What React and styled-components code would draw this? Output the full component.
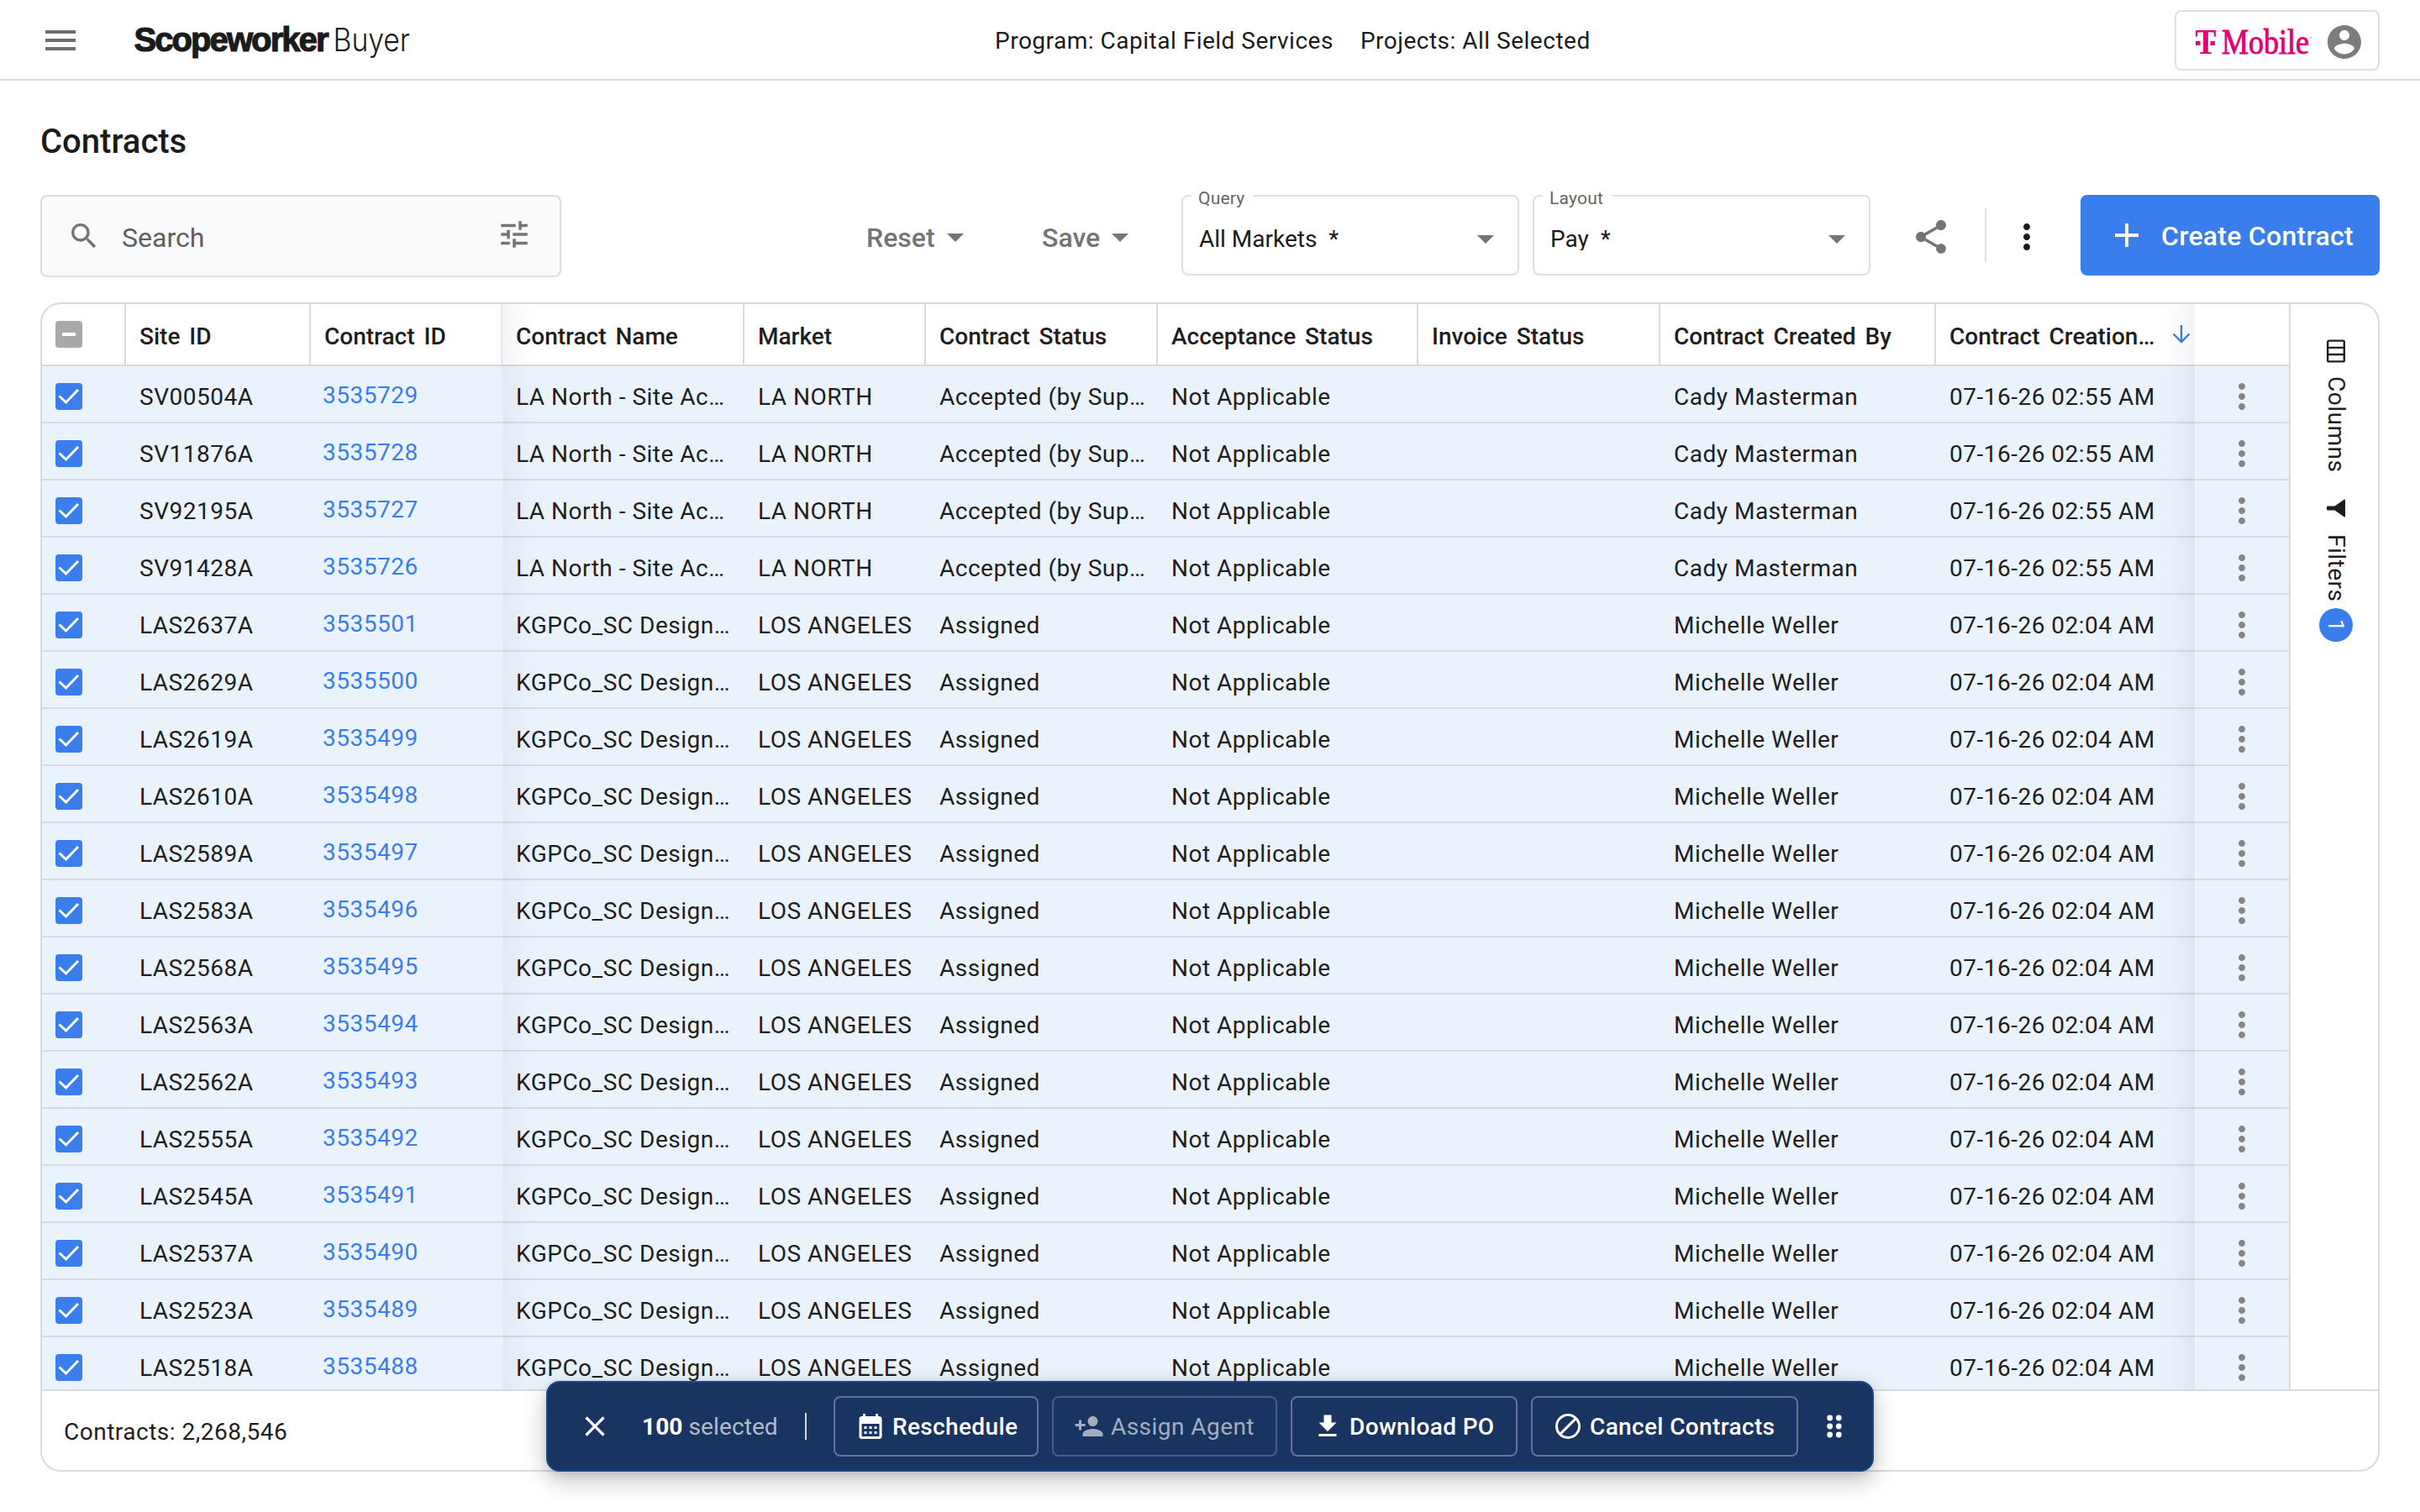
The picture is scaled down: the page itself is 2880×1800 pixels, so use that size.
import React from "react";
import styled, { createGlobalStyle, css } from "styled-components";

const GlobalStyle = createGlobalStyle`
  * { box-sizing: border-box; }
  body {
    margin: 0;
    background: #fff;
    color: #1e1e1e;
    font-family: Roboto, "Liberation Sans", sans-serif;
    font-size: 28px;
    overflow: hidden;
  }
  svg { display: block; flex: none; }
`;

/* ---------- icons ---------- */

const PATHS = {
  menu: "M3 18h18v-2H3v2zm0-5h18v-2H3v2zm0-7v2h18V6H3z",
  search:
    "M15.5 14h-.79l-.28-.27C15.41 12.59 16 11.11 16 9.5 16 5.91 13.09 3 9.5 3S3 5.91 3 9.5 5.91 16 9.5 16c1.61 0 3.09-.59 4.23-1.57l.27.28v.79l5 4.99L20.49 19l-4.99-5zm-6 0C7.01 14 5 11.99 5 9.5S7.01 5 9.5 5 14 7.01 14 9.5 11.99 14 9.5 14z",
  tune: "M3 17v2h6v-2H3zM3 5v2h10V5H3zm10 16v-2h8v-2h-8v-2h-2v6h2zM7 9v2H3v2h4v2h2V9H7zm14 4v-2H11v2h10zm-6-4h2V7h4V5h-4V3h-2v6z",
  caret: "M7 10l5 5 5-5z",
  share:
    "M18 16.08c-.76 0-1.44.3-1.96.77L8.91 12.7c.05-.23.09-.46.09-.7s-.04-.47-.09-.7l7.05-4.11c.54.5 1.25.81 2.04.81 1.66 0 3-1.34 3-3s-1.34-3-3-3-3 1.34-3 3c0 .24.04.47.09.7L8.04 9.81C7.5 9.31 6.79 9 6 9c-1.66 0-3 1.34-3 3s1.34 3 3 3c.79 0 1.5-.31 2.04-.81l7.12 4.16c-.05.21-.08.43-.08.65 0 1.61 1.31 2.92 2.92 2.92 1.61 0 2.92-1.31 2.92-2.92s-1.31-2.92-2.92-2.92z",
  more: "M12 8c1.1 0 2-.9 2-2s-.9-2-2-2-2 .9-2 2 .9 2 2 2zm0 2c-1.1 0-2 .9-2 2s.9 2 2 2 2-.9 2-2-.9-2-2-2zm0 6c-1.1 0-2 .9-2 2s.9 2 2 2 2-.9 2-2-.9-2-2-2z",
  plus: "M19 13h-6v6h-2v-6H5v-2h6V5h2v6h6v2z",
  account:
    "M12 2C6.48 2 2 6.48 2 12s4.48 10 10 10 10-4.48 10-10S17.52 2 12 2zm0 3c1.66 0 3 1.34 3 3s-1.34 3-3 3-3-1.34-3-3 1.34-3 3-3zm0 14.2c-2.5 0-4.71-1.28-6-3.22.03-1.99 4-3.08 6-3.08 1.99 0 5.97 1.09 6 3.08-1.29 1.94-3.5 3.22-6 3.22z",
  close:
    "M19 6.41L17.59 5 12 10.59 6.41 5 5 6.41 10.59 12 5 17.59 6.41 19 12 13.41 17.59 19 19 17.59 13.41 12z",
  calendar:
    "M19 4h-1V2h-2v2H8V2H6v2H5c-1.11 0-1.99.9-1.99 2L3 20a2 2 0 0 0 2 2h14c1.1 0 2-.9 2-2V6c0-1.1-.9-2-2-2zm0 16H5V10h14v10zM9 14H7v-2h2v2zm4 0h-2v-2h2v2zm4 0h-2v-2h2v2zm-8 4H7v-2h2v2zm4 0h-2v-2h2v2zm4 0h-2v-2h2v2z",
  personAdd:
    "M15 12c2.21 0 4-1.79 4-4s-1.79-4-4-4-4 1.79-4 4 1.79 4 4 4zm-9-2V7H4v3H1v2h3v3h2v-3h3v-2H6zm9 4c-2.67 0-8 1.34-8 4v2h16v-2c0-2.66-5.33-4-8-4z",
  download: "M19 9h-4V3H9v6H5l7 7 7-7zM5 18v2h14v-2H5z",
  block:
    "M12 2a10 10 0 1 0 0 20 10 10 0 0 0 0-20zM4 12a8 8 0 0 1 12.9-6.32L5.68 16.9A7.95 7.95 0 0 1 4 12zm8 8a7.95 7.95 0 0 1-4.9-1.68L18.32 7.1A8 8 0 0 1 12 20z",
};

const Icon = ({ name, size = 48, color = "currentColor" }) => (
  <svg width={size} height={size} viewBox="0 0 24 24" fill={color}>
    <path d={PATHS[name]} />
  </svg>
);

const ScopeworkerLogo = () => (
  <svg width="380" height="60" viewBox="0 0 380 60" fill="#1b1b1b">
    <text
      x="0.5" y="43" fontFamily="'Liberation Sans', sans-serif" fontWeight="700" fontSize="40"
      textLength="232" lengthAdjust="spacing" stroke="#1b1b1b" strokeWidth="1.2"
    >
      Scopeworker
    </text>
    <text
      x="237.5" y="43" fontFamily="Inter, sans-serif" fontWeight="300" fontSize="37.5"
      textLength="91.5" lengthAdjust="spacingAndGlyphs"
    >
      Buyer
    </text>
  </svg>
);

const TMobileLogo = () => (
  <svg width="150" height="60" viewBox="0 0 150 60" fill="#e20074" overflow="visible">
    <text
      x="2.5" y="43.5" fontFamily="'Liberation Serif', serif" fontWeight="700" fontSize="42"
      textLength="25" lengthAdjust="spacingAndGlyphs"
    >
      T
    </text>
    <rect x="3" y="29" width="5.500" height="5" />
    <rect x="20.500" y="29" width="5.500" height="5" />
    <text
      x="34" y="43.5" fontFamily="'Liberation Serif', serif" fontSize="42"
      textLength="104" lengthAdjust="spacingAndGlyphs" stroke="#e20074" strokeWidth="0.9"
    >
      Mobile
    </text>
    <rect x="139.500" y="24" width="1.400" height="1.400" opacity=".6" />
  </svg>
);

const ArrowDown = () => (
  <svg width="22" height="22" viewBox="0 0 22 22" fill="none" stroke="#3a7eed" strokeWidth="2.4">
    <path d="M11 0v20M1.500 10.500L11 20l9.500-9.500" />
  </svg>
);

const ColumnsIcon = () => (
  <svg width="22" height="28" viewBox="0 0 22 28" fill="none" stroke="#1e1e1e" strokeWidth="2.4">
    <rect x="1.200" y="1.600" width="19.600" height="24.800" rx="1.500" />
    <path d="M1 9.900h20M1 18h20" />
  </svg>
);

const FunnelIcon = () => (
  <svg width="22" height="22" viewBox="0 0 22 22" fill="#1e1e1e">
    <path d="M22 1.200v19.600c0 .9-.8 1-1.400.4L9.500 13.500H1.200A1.200 1.200 0 0 1 0 12.300V9.700a1.200 1.200 0 0 1 1.200-1.200h8.300L20.600.8c.6-.6 1.400-.5 1.400.4z" />
  </svg>
);

const DragDots = () => (
  <svg width="18" height="28" viewBox="0 0 18 28" fill="#fff">
    {[4, 14, 24].map((y) => (
      <React.Fragment key={y}>
        <circle cx="3.700" cy={y} r="3.400" />
        <circle cx="14.300" cy={y} r="3.400" />
      </React.Fragment>
    ))}
  </svg>
);

/* ---------- top bar ---------- */

const Screen = styled.div`
  position: relative;
  width: 2880px;
  height: 1800px;
  display: flex;
  flex-direction: column;
`;

const TopBar = styled.header`
  height: 96px;
  flex: none;
  display: grid;
  grid-template-columns: 1136px 1fr auto;
  align-items: center;
  padding: 0 48px;
  border-bottom: 2px solid #dadbe0;
`;

const Brand = styled.div`
  display: flex;
  align-items: center;
  gap: 63px;
  padding-top: 2px;
  color: #6f6f6f;
`;

const Scope = styled.div`
  display: flex;
  gap: 32px;
  line-height: 37px;
  padding-top: 3px;
  letter-spacing: 0.5px;
  color: #1b1b1b;
`;

const Account = styled.div`
  width: 244px;
  height: 72px;
  display: flex;
  align-items: center;
  justify-content: space-between;
  padding: 4px 16px 0 20px;
  border: 2px solid #e0e0e0;
  border-radius: 8px;
  margin-top: 2px;
`;

/* ---------- toolbar ---------- */

const Main = styled.main`
  flex: 1;
  min-height: 0;
  display: flex;
  flex-direction: column;
  padding: 48px;
`;

const Title = styled.h1`
  margin: 1px 0 39px;
  font-size: 40px;
  line-height: 48px;
  font-weight: 500;
  color: #1b1b1b;
`;

const Toolbar = styled.div`
  display: flex;
  flex: none;
  align-items: flex-start;
  height: 98px;
  margin-bottom: 30px;
`;

const SearchBox = styled.div`
  width: 620px;
  height: 98px;
  display: flex;
  align-items: center;
  padding: 0 33px 0 30px;
  border: 2px solid #dcdddd;
  border-radius: 8px;
  background: #f9fafc;
  color: #737373;
  margin-right: auto;
  svg:last-child { margin: -4px 0 0 auto; }
`;

const Placeholder = styled.span`
  font-size: 32px;
  line-height: 40px;
  margin: 4px 0 0 25px;
  color: #5f5f5f;
`;

const TextButton = styled.div`
  display: flex;
  align-items: center;
  width: ${(p) => p.$width}px;
  height: 96px;
  padding: 6px 0 0 1px;
  font-size: 32px;
  font-weight: 500;
  color: #757575;
  svg { margin-top: -2px; }
`;

const Field = styled.fieldset`
  width: 402px;
  height: 107px;
  margin: -11px 16px 0 0;
  padding: 0 14px 0 19px;
  border: 2px solid #e0e0e0;
  border-radius: 8px;
  min-width: 0;
  color: #1b1b1b;
`;

const Legend = styled.legend`
  height: 24px;
  margin-left: -9px;
  padding: 0 10px 0 8px;
  font-size: 21px;
  line-height: 30px;
  letter-spacing: 0.2px;
  color: #666;
`;

const FieldValue = styled.div`
  display: flex;
  align-items: center;
  justify-content: space-between;
  height: 48px;
  margin-top: 15px;
  color: #757575;
`;

const FieldText = styled.span`
  height: 27px;
  line-height: 27px;
  overflow: hidden;
  white-space: pre;
  color: #1b1b1b;
`;

const IconSlot = styled.div`
  height: 96px;
  display: flex;
  align-items: center;
  padding: 4px 0 0 ${(p) => p.$inset || 0}px;
  color: ${(p) => p.$color};
`;

const Divider = styled.div`
  width: 2px;
  height: ${(p) => p.$height}px;
  margin: ${(p) => p.$margin};
  background: ${(p) => p.$color};
`;

const CreateButton = styled.button`
  width: 356px;
  height: 96px;
  display: flex;
  align-items: center;
  gap: 17px;
  margin-left: 40px;
  padding: 2px 0 0 31px;
  border: 0;
  border-radius: 8px;
  background: #3a7eed;
  color: #fff;
  font: 500 32px/40px Roboto, sans-serif;
  letter-spacing: 0.26px;
  white-space: nowrap;
  svg { margin-top: -2px; }
`;

/* ---------- grid ---------- */

const Panel = styled.section`
  flex: 1;
  display: flex;
  flex-direction: column;
  min-height: 0;
  border: 2px solid #dadbe0;
  border-radius: 24px;
  overflow: hidden;
`;

const PanelBody = styled.div`
  flex: 1;
  min-height: 0;
  display: flex;
  border-bottom: 2px solid #d9dadf;
`;

const Table = styled.div`
  width: 2676px;
  overflow: hidden;
  border-right: 2px solid #d9dadf;
`;

const rowGrid = css`
  display: grid;
  grid-template-columns: 100px 220px 228px 288px 216px 276px 310px 288px 328px 308px 112px;
`;

const HeaderRow = styled.div`
  ${rowGrid}
  height: 74px;
  border-bottom: 2px solid #d9dadf;
`;

const Row = styled.div`
  ${rowGrid}
  grid-template-rows: 66px;
  height: 68px;
  background: #eaf2fc;
  border-bottom: 2px solid #d7dae0;
`;

const edge = {
  left: css`
    &::before {
      content: "";
      position: absolute;
      inset: 0 auto -2px 0;
      width: 44px;
      background: linear-gradient(to right, rgba(20, 10, 60, 0.04), rgba(20, 10, 60, 0.014) 50%, transparent);
    }
  `,
  right: css`
    &::before {
      content: "";
      position: absolute;
      inset: 0 0 -2px auto;
      width: 46px;
      background: linear-gradient(to left, rgba(20, 10, 60, 0.05), rgba(20, 10, 60, 0.016) 50%, transparent);
    }
  `,
};

const HeadCell = styled.div`
  position: relative;
  display: flex;
  align-items: center;
  justify-content: space-between;
  padding: 4px 5px 0 16px;
  border-right: ${(p) => (p.$line ? `2px solid ${p.$line}` : "0")};
  font-weight: 500;
  word-spacing: 4px;
  white-space: nowrap;
  svg { margin-top: -5px; }
  ${(p) => edge[p.$edge]}
`;

const Cell = styled.div`
  position: relative;
  padding-left: 16px;
  padding-top: 3px;
  line-height: 67px;
  letter-spacing: 0.5px;
  white-space: nowrap;
  ${(p) => edge[p.$edge]}
`;

const LinkCell = styled(Cell)`
  padding-left: 14px;
  padding-top: 1px;
  color: #3a7eed;
`;

const CheckCell = styled.div`
  display: flex;
  padding: 20px 0 0 16px;
  border-right: ${(p) => (p.$line ? "2px solid #dadbe0" : "0")};
`;

const CheckBox = styled.div`
  width: 32px;
  height: 32px;
  display: flex;
  align-items: center;
  justify-content: center;
  border-radius: 4px;
  background: ${(p) => (p.$checked ? "#3a7eed" : "#a9a9a9")};
`;

const MenuCell = styled.div`
  display: flex;
  justify-content: center;
  align-items: center;
  padding-top: 6px;
  color: #868686;
`;

const SideBar = styled.aside`
  flex: 1;
  display: flex;
  flex-direction: column;
  align-items: center;
  padding: 42px 0 0 4px;
`;

const SideLabel = styled.span`
  writing-mode: vertical-rl;
  line-height: 32px;
  letter-spacing: 0.5px;
  margin: ${(p) => p.$margin};
`;

const Badge = styled.span`
  width: 40px;
  height: 40px;
  border-radius: 50%;
  background: #3a7eed;
  color: #fff;
  font-size: 26px;
  line-height: 40px;
  text-align: center;
  writing-mode: vertical-rl;
`;

const PanelFooter = styled.footer`
  height: 94px;
  flex: none;
  padding: 2px 0 0 26px;
  line-height: 93px;
  letter-spacing: 0.5px;
`;

/* ---------- floating selection bar ---------- */

const ActionBar = styled.div`
  position: absolute;
  left: 650px;
  top: 1644px;
  width: 1580px;
  height: 108px;
  display: flex;
  align-items: center;
  padding-left: 36px;
  border: 2px solid #1b4585;
  border-radius: 16px;
  background: #1a3461;
  color: #fff;
  box-shadow: 0 10px 28px rgba(0, 0, 0, 0.26), 0 2px 8px rgba(0, 0, 0, 0.08);
`;

const Selected = styled.div`
  width: 161px;
  margin: 1px 0 0 36px;
  letter-spacing: 0.1px;
  color: #b3bbca;
  white-space: nowrap;
  b { font-weight: 700; color: #fff; }
`;

const Action = styled.button`
  width: ${(p) => p.$width}px;
  height: 72px;
  display: flex;
  align-items: center;
  gap: 8px;
  margin-right: 16px;
  padding: 0 0 0 24px;
  border: 2px solid ${(p) => (p.$disabled ? "rgba(255,255,255,.2)" : "rgba(255,255,255,.32)")};
  border-radius: 8px;
  background: transparent;
  color: ${(p) => (p.$disabled ? "#a3adbf" : "#fff")};
  font: 500 28px/37px Roboto, sans-serif;
  font-weight: ${(p) => (p.$disabled ? 400 : 500)};
  letter-spacing: ${(p) => (p.$disabled ? 0.45 : 0.36)}px;
  white-space: nowrap;
  &:last-of-type { margin-right: 34px; }
`;

/* ---------- data ---------- */

const HEADERS = [
  ["Site ID", "#dadbe0"],
  ["Contract ID", "#e9e9eb"],
  ["Contract Name", "#dadbe0", "left"],
  ["Market", "#dadbe0"],
  ["Contract Status", "#dadbe0"],
  ["Acceptance Status", "#dadbe0"],
  ["Invoice Status", "#dadbe0"],
  ["Contract Created By", "#dadbe0"],
];

const north = (site, id) => [
  site, id, "LA North - Site Ac…", "LA NORTH", "Accepted (by Sup…", "Cady Masterman", "07-16-26 02:55 AM",
];
const angeles = (site, id) => [
  site, id, "KGPCo_SC Design…", "LOS ANGELES", "Assigned", "Michelle Weller", "07-16-26 02:04 AM",
];

const ROWS = [
  north("SV00504A", 3535729),
  north("SV11876A", 3535728),
  north("SV92195A", 3535727),
  north("SV91428A", 3535726),
  angeles("LAS2637A", 3535501),
  angeles("LAS2629A", 3535500),
  angeles("LAS2619A", 3535499),
  angeles("LAS2610A", 3535498),
  angeles("LAS2589A", 3535497),
  angeles("LAS2583A", 3535496),
  angeles("LAS2568A", 3535495),
  angeles("LAS2563A", 3535494),
  angeles("LAS2562A", 3535493),
  angeles("LAS2555A", 3535492),
  angeles("LAS2545A", 3535491),
  angeles("LAS2537A", 3535490),
  angeles("LAS2523A", 3535489),
  angeles("LAS2518A", 3535488),
];

const Check = () => (
  <svg width="32" height="32" viewBox="0 0 32 32" fill="none" stroke="#fff" strokeWidth="3">
    <path d="M4.500 15.500l8 7.500L27 8" />
  </svg>
);

const Dash = () => (
  <svg width="16" height="4" viewBox="0 0 16 4">
    <rect width="16" height="4" fill="#fff" />
  </svg>
);

const GridRow = ({ data: [site, id, name, market, status, by, date] }) => (
  <Row>
    <CheckCell>
      <CheckBox $checked><Check /></CheckBox>
    </CheckCell>
    <Cell>{site}</Cell>
    <LinkCell>{id}</LinkCell>
    <Cell $edge="left">{name}</Cell>
    <Cell>{market}</Cell>
    <Cell>{status}</Cell>
    <Cell>Not Applicable</Cell>
    <Cell />
    <Cell>{by}</Cell>
    <Cell $edge="right">{date}</Cell>
    <MenuCell><Icon name="more" /></MenuCell>
  </Row>
);

const SelectField = ({ label, value }) => (
  <Field>
    <Legend>{label}</Legend>
    <FieldValue>
      <FieldText>{value}</FieldText>
      <Icon name="caret" />
    </FieldValue>
  </Field>
);

export default function App() {
  return (
    <Screen>
      <GlobalStyle />
      <TopBar>
        <Brand>
          <Icon name="menu" />
          <ScopeworkerLogo />
        </Brand>
        <Scope>
          <span>Program: Capital Field Services</span>
          <span>Projects: All Selected</span>
        </Scope>
        <Account>
          <TMobileLogo />
          <Icon name="account" color="#7b7c7e" />
        </Account>
      </TopBar>

      <Main>
        <Title>Contracts</Title>
        <Toolbar>
          <SearchBox>
            <Icon name="search" size={40} />
            <Placeholder>Search</Placeholder>
            <Icon name="tune" size={42} />
          </SearchBox>
          <TextButton $width={209}>Reset<Icon name="caret" /></TextButton>
          <TextButton $width={167}>Save<Icon name="caret" /></TextButton>
          <SelectField label="Query" value="All Markets  *" />
          <SelectField label="Layout" value="Pay  *" />
          <IconSlot $color="#757575" $inset={32}><Icon name="share" /></IconSlot>
          <Divider $height={64} $margin="16px 24px 0 40px" $color="#dfe0e2" />
          <IconSlot $color="#1b1b1b"><Icon name="more" /></IconSlot>
          <CreateButton>
            <Icon name="plus" />
            Create Contract
          </CreateButton>
        </Toolbar>

        <Panel>
          <PanelBody>
            <Table>
              <HeaderRow>
                <CheckCell $line>
                  <CheckBox><Dash /></CheckBox>
                </CheckCell>
                {HEADERS.map(([label, line, side]) => (
                  <HeadCell key={label} $line={line} $edge={side}>{label}</HeadCell>
                ))}
                <HeadCell $edge="right">
                  Contract Creation…
                  <ArrowDown />
                </HeadCell>
                <div />
              </HeaderRow>
              {ROWS.map((row) => <GridRow key={row[1]} data={row} />)}
            </Table>
            <SideBar>
              <ColumnsIcon />
              <SideLabel $margin="16px 0 0">Columns</SideLabel>
              <SideLabel $margin="32px 0 20px"><FunnelIcon /></SideLabel>
              <SideLabel $margin="0 0 7px">Filters</SideLabel>
              <Badge>1</Badge>
            </SideBar>
          </PanelBody>
          <PanelFooter>Contracts: 2,268,546</PanelFooter>
        </Panel>
      </Main>

      <ActionBar>
        <Icon name="close" size={40} />
        <Selected><b>100</b> selected</Selected>
        <Divider $height={32} $margin="0 32px 0 33px" $color="#d4d9e2" />
        <Action $width={244}><Icon name="calendar" size={36} />Reschedule</Action>
        <Action $width={268} $disabled><Icon name="personAdd" size={36} />Assign Agent</Action>
        <Action $width={270}><Icon name="download" size={36} />Download PO</Action>
        <Action $width={318}><Icon name="block" size={36} />Cancel Contracts</Action>
        <DragDots />
      </ActionBar>
    </Screen>
  );
}
